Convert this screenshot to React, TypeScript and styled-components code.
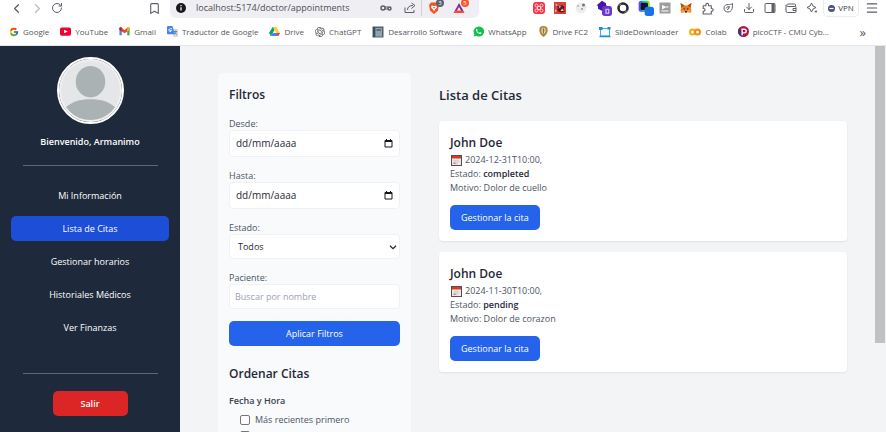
import React from "react";
import styled, { createGlobalStyle, css } from "styled-components";
import {
  ChevronLeft, ChevronRight, RotateCw, Bookmark, Puzzle, Download, Menu,
} from "lucide-react";
import { FcGoogle } from "react-icons/fc";
import { SiOpenai } from "react-icons/si";

const GlobalStyle = createGlobalStyle`
  *, *::before, *::after { box-sizing: border-box; }
  html, body, #root { height: 100%; margin: 0; }
  body { font: 9px/14px "Open Sans", "Noto Sans", sans-serif; color: #1f2937; overflow: hidden; }
  button, input, select { font: inherit; color: inherit; margin: 0; padding: 0; border: 0; }
  button { background: none; cursor: pointer; }
  a { color: inherit; text-decoration: none; }
  h1, h2, h3, h4, p { margin: 0; font: inherit; }
  svg { display: block; flex: none; }
`;

const Window = styled.div`
  display: flex;
  flex-direction: column;
  height: 100vh;
  overflow: hidden;
  background: #f3f4f6;
`;

/* ---------- browser chrome ---------- */

const Chrome = styled.header`
  flex: none;
  background: #fff;
  border-bottom: 1px solid #e6e6e9;
`;

const Toolbar = styled.div`
  display: flex;
  height: 18px;
  padding: 0 9px;
`;

const NavButtons = styled.div`
  display: flex;
  gap: 9px;
  margin-right: 85px;
  height: 16px;
  align-items: center;
`;

const ToolButton = styled.button<{ $faded?: boolean }>`
  position: relative;
  display: grid;
  place-items: center;
  width: 12px;
  height: 16px;
  color: ${(p) => (p.$faded ? "#bcbcc0" : "#5b5e66")};
`;

const AddressBar = styled.div`
  display: flex;
  align-items: center;
  gap: 10px;
  flex: 0 1 309px;
  margin-left: 10px;
  padding: 0 14px 2px 6px;
  background: #efeef3;
  border-radius: 0 0 6px 6px;
`;

const AddressInput = styled.input`
  flex: 1;
  min-width: 0;
  background: none;
  outline: none;
  color: #4d4f57;
`;

const AddressTools = styled.div`
  display: flex;
  align-items: center;
  gap: 5px;
`;

const PageTools = styled.div`
  display: flex;
  gap: 12px;
`;

const Shields = styled.div`
  display: flex;
  gap: 13px;
  padding-left: 6px;
  border-left: 1px solid #d2d1d8;
`;

const Badge = styled.span<{ $color: string }>`
  position: absolute;
  top: -1px;
  right: -4px;
  width: 8px;
  height: 8px;
  border-radius: 4px;
  background: ${(p) => p.$color};
  color: #fff;
  font-size: 6px;
  line-height: 8px;
  text-align: center;
`;

const Extensions = styled.div`
  display: flex;
  gap: 9px;
  margin-left: auto;
`;

const VpnButton = styled.button`
  display: flex;
  align-items: center;
  justify-content: center;
  gap: 3px;
  width: 36px;
  height: 17px;
  margin: 0 6px 0 5px;
  border: 1px solid #ececf0;
  border-top: 0;
  border-radius: 0 0 5px 5px;
  font-size: 8px;
  color: #3b3d4f;
`;

const Bookmarks = styled.nav`
  display: flex;
  align-items: center;
  gap: 11px;
  height: 27px;
  padding: 0 20px 0 9px;
  font-size: 8px;
  color: #55565c;
`;

const BookmarkLink = styled.a`
  display: flex;
  align-items: center;
  gap: 4px;
  white-space: nowrap;
`;

const More = styled.button`
  margin-left: auto;
  font-size: 13px;
  line-height: 12px;
`;

/* ---------- application ---------- */

const AppBody = styled.div`
  display: flex;
  flex: 1;
  min-height: 0;
`;

const Sidebar = styled.aside`
  flex: none;
  display: flex;
  flex-direction: column;
  align-items: center;
  width: 180px;
  padding: 11px;
  background: #1e293b;
  color: #fff;
`;

const Avatar = styled.div`
  flex: none;
  width: 67px;
  height: 67px;
  border: 2px solid #fff;
  border-radius: 50%;
  overflow: hidden;
`;

const Welcome = styled.p`
  margin: 11px 0 16px;
  font-weight: 600;
`;

const Divider = styled.hr`
  flex: none;
  width: 135px;
  height: 1px;
  margin: 0;
  border: 0;
  background: #5d6675;
`;

const SideNav = styled.nav`
  display: flex;
  flex-direction: column;
  align-self: stretch;
  gap: 8px;
  margin: 17px 0 33px;
`;

const SideLink = styled.a<{ $active?: boolean }>`
  height: 25px;
  line-height: 25px;
  border-radius: 5px;
  text-align: center;
  ${(p) => p.$active && css`background: #1d4ed8;`}
`;

const Button = styled.button<{ $variant?: "danger"; $wide?: boolean }>`
  height: 25px;
  padding: 0 11px;
  border-radius: 5px;
  background: #2563eb;
  color: #fff;
  ${(p) => p.$wide && css`width: 100%;`}
  ${(p) => p.$variant === "danger" && css`
    width: 75px;
    margin-top: 17px;
    background: #dc2626;
    font-weight: 600;
    flex: none;
  `}
`;

const Main = styled.main`
  flex: 1;
  min-width: 0;
  display: grid;
  grid-template-columns: 193px minmax(0, 1fr);
  gap: 28px;
  padding: 27px 28px 0 38px;
`;

const FilterCard = styled.section`
  align-self: start;
  padding: 11px;
  border-radius: 5px;
  background: #f9fafb;
`;

const PanelTitle = styled.h2`
  font-size: 12px;
  line-height: 22px;
  font-weight: 600;
`;

const Form = styled.form`
  display: flex;
  flex-direction: column;
  gap: 12px;
  margin: 11px 0 17px;
`;

const Field = styled.label`
  display: block;
  line-height: 13px;
  color: #4b5563;
`;

const controlBox = css`
  width: 100%;
  background: #fff;
  border: 1px solid #f0f1f3;
  border-radius: 4px;
`;

const DateBox = styled.span`
  ${controlBox}
  display: flex;
  align-items: center;
  height: 27px;
  padding: 0 6px;
`;

const DateInput = styled.input`
  flex: 1;
  min-width: 0;
  background: none;
  outline: none;
  font-size: 10px;
  &::placeholder { color: #1f2937; opacity: 1; }
`;

const SelectBox = styled.span`
  ${controlBox}
  display: flex;
  align-items: center;
  height: 25px;
  padding-right: 2px;
`;

const Select = styled.select`
  flex: 1;
  height: 23px;
  padding-left: 8px;
  background: none;
  appearance: none;
  outline: none;
  color: #1f2937;
`;

const TextInput = styled.input`
  ${controlBox}
  display: block;
  height: 25px;
  padding: 0 5px;
  outline: none;
  &::placeholder { color: #9ca3af; opacity: 1; }
`;

const GroupTitle = styled.h3`
  margin: 9px 0 5px;
  font-weight: 600;
  color: #374151;
`;

const CheckList = styled.div`
  display: flex;
  flex-direction: column;
  gap: 3px;
  padding-left: 11px;
`;

const CheckLabel = styled.label`
  display: flex;
  align-items: center;
  gap: 5px;
  height: 13px;
  color: #4b5563;
`;

const Checkbox = styled.input`
  appearance: none;
  width: 10px;
  height: 10px;
  border: 1px solid #767676;
  border-radius: 2px;
  background: #fff;
  &:checked { background: #2563eb; }
`;

const ListSection = styled.section`
  padding-top: 11px;
`;

const ListTitle = styled.h1`
  margin-bottom: 15px;
  font-size: 13px;
  line-height: 22px;
  font-weight: 600;
`;

const Cards = styled.div`
  display: flex;
  flex-direction: column;
  gap: 11px;
`;

const Card = styled.article`
  padding: 11px;
  border-radius: 4px;
  background: #fff;
  box-shadow: 0 1px 2px rgba(0, 0, 0, 0.08);
  color: #4b5563;
`;

const Patient = styled.h2`
  font-size: 12px;
  line-height: 21px;
  font-weight: 600;
  color: #1f2937;
`;

const When = styled.p`
  display: flex;
  align-items: center;
  gap: 3px;
  padding-left: 1px;
`;

const Status = styled.strong`
  font-weight: 600;
  color: #1f2937;
`;

const Actions = styled.div`
  margin-top: 10px;
`;

const Scrollbar = styled.div`
  flex: none;
  width: 11px;
  padding-right: 1px;
`;

const Thumb = styled.div`
  height: 77%;
  background: #c1c1c3;
`;

/* ---------- drawings ---------- */

const Ico = ({ children, box = 24, size = 12 }: { children: React.ReactNode; box?: number; size?: number }) => (
  <svg width={size} height={size} viewBox={`0 0 ${box} ${box}`} fill="none" aria-hidden="true">{children}</svg>
);

const extensions: { name: string; icon: React.ReactNode }[] = [
  { name: "Atajos", icon: <Ico><rect width="24" height="24" rx="6" fill="#fb2f4d" /><path d="M9 9h6v6H9z" stroke="#ffd4c8" strokeWidth="2" /><g fill="#fb2f4d" stroke="#ffd4c8" strokeWidth="2"><circle cx="7" cy="7" r="3" /><circle cx="17" cy="7" r="3" /><circle cx="7" cy="17" r="3" /><circle cx="17" cy="17" r="3" /></g></Ico> },
  { name: "Lector", icon: <Ico><rect width="24" height="24" fill="#d8413b" /><path d="M6 8l5 1 5-3 5 4-2 4 3 5-6 2-6-1-4-4 2-4z" fill="#571b1c" /><path d="M3 4l4 1-2 4zM16 13l4 5h-7zM10 8l4 1-3 4zM2 15l4 2-3 4z" fill="#f5c3b7" /></Ico> },
  { name: "Mascota", icon: <Ico><circle cx="12" cy="12" r="11" fill="#ededee" /><circle cx="6" cy="8" r="2" fill="#b6b6b8" /><circle cx="17" cy="6" r="3" fill="#747478" /><circle cx="14" cy="14" r="2" fill="#99999c" /></Ico> },
  { name: "Bloques", icon: <Ico size={16}><path d="M9 1l6 4v3l5 3-8 7-9-5V9L1 8z" fill="#4a16a8" /><rect x="9" y="9" width="15" height="15" rx="4" fill="#6938cf" /><rect x="14" y="13" width="6" height="8" rx="1" fill="#c7b4f5" /><path d="M17 15v4" stroke="#6938cf" strokeWidth="2" /></Ico> },
  { name: "Anillo", icon: <Ico><circle cx="12" cy="12" r="9" stroke="#26272b" strokeWidth="5" /><path d="M3 7l6-3M15 21l6-4" stroke="#8b8c91" strokeWidth="2" /></Ico> },
  { name: "Selector", icon: <Ico size={16}><defs><linearGradient id="spectrum" x1="0" y1="0" x2="1" y2="0"><stop offset="0" stopColor="#7a28ff" /><stop offset=".4" stopColor="#18b7e8" /><stop offset=".7" stopColor="#2ce05b" /><stop offset="1" stopColor="#d6e033" /></linearGradient></defs><rect x="1" y="1" width="17" height="17" rx="4" fill="url(#spectrum)" /><rect x="4" y="4" width="11" height="11" rx="2" fill="#111326" /><rect x="10" y="10" width="14" height="14" rx="4" fill="#1a73e8" /></Ico> },
  { name: "Video", icon: <Ico><rect x="1" y="1" width="22" height="22" fill="#9d9d9f" /><path d="M6 6l9 4-9 5z" fill="#fff" /><path d="M5 18h14M14 10h5" stroke="#fff" strokeWidth="2" /></Ico> },
  { name: "Zorro", icon: <Ico><path d="M1 2l8 5h6l8-5-2 9 2 6-2 5-6-2-2 2h-2l-2-2-6 2-2-5 2-6z" fill="#ee7d1b" /><path d="M1 2l8 5-6 5zM23 2l-8 5 6 5z" fill="#b64f17" /><path d="M6 12l4 1v3zM18 12l-4 1v3zM9 18h6l-2 3h-2z" fill="#233447" /><path d="M3 17l5-1 2 4-6 1zM21 17l-5-1-2 4 6 1z" fill="#f6a351" /></Ico> },
  { name: "Extensiones", icon: <Ico size={13}><path d="M4 7h5V5a2 2 0 0 1 5 0v2h5v5h1a2 2 0 0 1 0 5h-1v5H4v-5h1a2 2 0 0 0 0-5H4z" stroke="currentColor" strokeWidth="2" strokeLinejoin="round" /></Ico> },
  { name: "Leo", icon: <Ico><path d="M21 3c0 10-1 17-9 17-5 0-8-3-8-8s4-7 9-7c3 0 6 0 8-2zM8 13c2-4 5-4 7-4-1 4-2 6-5 6" stroke="currentColor" strokeWidth="2" /><path d="M12 12h2" stroke="currentColor" strokeWidth="2" /></Ico> },
  { name: "Descargas", icon: <Download size={12} /> },
  { name: "Panel lateral", icon: <Ico><rect x="2" y="3" width="20" height="18" rx="2" stroke="currentColor" strokeWidth="2" /><path d="M15 3h6v18h-6z" fill="currentColor" /></Ico> },
  { name: "Cartera", icon: <Ico><path d="M21 8V6a2 2 0 0 0-2-2H5a3 3 0 0 0 0 5h15a2 2 0 0 1 2 2v8a2 2 0 0 1-2 2H5a3 3 0 0 1-3-3V6M22 13h-6v4h6" stroke="currentColor" strokeWidth="2" /></Ico> },
  { name: "Asistente", icon: <Ico><path d="M11 2l3 6 6 3-6 3-3 6-3-6-6-3 6-3z" stroke="currentColor" strokeWidth="2" strokeLinejoin="round" /><path d="M20 16l1 2 2 1-2 1-1 3-1-3-3-1 3-1z" fill="currentColor" /></Ico> },
];

const bookmarks: { name: string; icon: React.ReactNode }[] = [
  { name: "Google", icon: <FcGoogle size={10} /> },
  { name: "YouTube", icon: <Ico size={11}><rect y="3" width="24" height="18" rx="4" fill="#f00033" /><path d="M9 8l8 4-8 4z" fill="#fff" /></Ico> },
  { name: "Gmail", icon: <Ico size={11}><path d="M1 5v15h5V10z" fill="#4285f4" /><path d="M23 5v15h-5V10z" fill="#34a853" /><path d="M1 5c0-2 3-3 5-1l6 5 6-5c2-2 5-1 5 1v3l-11 8L1 8z" fill="#ea4335" /><path d="M18 4c2-2 5-1 5 1v3l-5 4z" fill="#fbbc04" /><path d="M1 5c0-2 3-3 5-1v8L1 8z" fill="#c5221f" /></Ico> },
  { name: "Traductor de Google", icon: <Ico size={11}><path d="M10 6h12a2 2 0 0 1 2 2v14a2 2 0 0 1-2 2h-8z" fill="#d5d9e0" /><path d="M2 0h10l5 18H2a2 2 0 0 1-2-2V2a2 2 0 0 1 2-2z" fill="#4285f4" /><path d="M11 6H7a3 3 0 1 0 3 4H7" stroke="#fff" strokeWidth="2" /><path d="M15 12h7M18 10v2M20 12c-1 4-3 5-4 6M17 14l4 5" stroke="#607d9b" strokeWidth="2" /></Ico> },
  { name: "Drive", icon: <Ico size={11}><path d="M8 2h8L4 22l-4-7z" fill="#0f9d58" /><path d="M8 2h8l8 13h-8z" fill="#ffcd40" /><path d="M8 15h16l-4 7H4z" fill="#4285f4" /><path d="M16 15h8l-4 7z" fill="#ea4335" /></Ico> },
  { name: "ChatGPT", icon: <SiOpenai size={10} /> },
  { name: "Desarrollo Software", icon: <Ico size={12}><rect x="1" y="1" width="22" height="22" fill="#53616c" /><rect x="7" y="4" width="13" height="17" fill="#8fa5b6" /><path d="M4 2v20M9 8h9" stroke="#2f3942" strokeWidth="2" /></Ico> },
  { name: "WhatsApp", icon: <Ico size={11}><path d="M12 1a11 11 0 0 0-9 17l-2 5 6-2A11 11 0 1 0 12 1z" fill="#12c04c" /><path d="M8 6c-4 3 2 12 8 12 2 0 3-3 2-4l-3-1-2 2c-2-1-3-2-4-4l1-2-1-3z" fill="#fff" /></Ico> },
  { name: "Drive FC2", icon: <Ico size={11}><path d="M12 0c7 0 10 4 9 11-1 6-4 10-9 13-5-3-8-7-9-13C2 4 5 0 12 0z" fill="#a88745" /><ellipse cx="12" cy="10" rx="5" ry="7" fill="#e0cc96" /><path d="M12 5v11M10 9h4" stroke="#8a6c34" strokeWidth="2" /></Ico> },
  { name: "SlideDownloader", icon: <Ico size={12}><rect x="3" y="5" width="18" height="15" stroke="#48a9e6" strokeWidth="2" fill="#f3faff" /><path d="M0 2h7v6H0zM17 2h6v5h-6z" fill="#248bd0" /><path d="M1 21h22" stroke="#248bd0" strokeWidth="3" /></Ico> },
  { name: "Colab", icon: <Ico size={12}><circle cx="7" cy="12" r="5" stroke="#f9ab00" strokeWidth="4" /><circle cx="17" cy="12" r="5" stroke="#f28b0c" strokeWidth="4" /></Ico> },
  { name: "picoCTF - CMU Cyb...", icon: <Ico size={11}><circle cx="12" cy="12" r="12" fill="#b3123c" /><path d="M3 4a12 12 0 0 0 5 19l1-8z" fill="#45317a" /><path d="M9 20V7h5a4 4 0 0 1 0 8H9" stroke="#fff" strokeWidth="3" /></Ico> },
];

const AvatarPicture = () => (
  <svg width="63" height="63" viewBox="0 0 64 64" role="img" aria-label="Foto de perfil">
    <rect width="64" height="64" fill="#e4e6e8" />
    <ellipse cx="32" cy="23" rx="15" ry="16" fill="#aab2b4" />
    <path d="M4 52C12 43 22 41 32 41s20 2 28 11v12H4z" fill="#aab2b4" />
    <circle cx="32" cy="32" r="31" fill="none" stroke="#eff0f1" strokeWidth="2" />
  </svg>
);

const DateIcon = () => (
  <Ico size={9} box={18}><path d="M2 3h14v13H2zM5 0v3M13 0v3" stroke="#15171a" strokeWidth="2" /><path d="M2 3h14v3H2z" fill="#15171a" /></Ico>
);

const CalendarIcon = () => (
  <Ico size={11} box={22}>
    <rect x="1" y="1" width="20" height="20" fill="#ece9e8" stroke="#5b4d4c" strokeWidth="2" />
    <path d="M2 2h18v5H2z" fill="#d93a22" />
    <path d="M5 11h12M5 14h12M5 17h7M8 9v10M12 9v10" stroke="#c9c3c2" />
    <path d="M5 15h4v3H5z" fill="#e07a68" />
  </Ico>
);

const appointments = [
  { date: "2024-12-31T10:00,", status: "completed", reason: "Dolor de cuello" },
  { date: "2024-11-30T10:00,", status: "pending", reason: "Dolor de corazon" },
];

const sections = ["Mi Información", "Lista de Citas", "Gestionar horarios", "Historiales Médicos", "Ver Finanzas"];

const DateField = ({ label }: { label: string }) => (
  <Field>
    {label}
    <DateBox>
      <DateInput type="text" placeholder="dd/mm/aaaa" />
      <DateIcon />
    </DateBox>
  </Field>
);

export default function App() {
  return (
    <Window>
      <GlobalStyle />
      <Chrome>
        <Toolbar>
          <NavButtons>
            <ToolButton aria-label="Atrás"><ChevronLeft size={15} strokeWidth={2} /></ToolButton>
            <ToolButton aria-label="Adelante" $faded><ChevronRight size={15} strokeWidth={2} /></ToolButton>
            <ToolButton aria-label="Recargar"><RotateCw size={12} strokeWidth={2} /></ToolButton>
          </NavButtons>
          <ToolButton aria-label="Guardar marcador"><Bookmark size={13} strokeWidth={2} /></ToolButton>
          <AddressBar>
            <Ico size={10}><circle cx="12" cy="12" r="12" fill="#17181c" /><path d="M12 10v8M12 5v3" stroke="#fff" strokeWidth="3" /></Ico>
            <AddressInput aria-label="Dirección" defaultValue="localhost:5174/doctor/appointments" />
            <AddressTools>
              <PageTools>
                <ToolButton aria-label="Contraseñas"><Ico><circle cx="6" cy="12" r="4" stroke="currentColor" strokeWidth="3" /><path d="M10 10h7M10 14h7" stroke="currentColor" strokeWidth="2" /><circle cx="19" cy="13" r="3" stroke="currentColor" strokeWidth="3" /></Ico></ToolButton>
                <ToolButton aria-label="Compartir"><Ico><path d="M2 11v10h18v-5M7 16c0-6 4-9 11-9M15 2l7 5-7 6" stroke="currentColor" strokeWidth="2" /></Ico></ToolButton>
              </PageTools>
              <Shields>
                <ToolButton aria-label="Escudos">
                  <Ico><path d="M6 1h12l4 5-2 11-8 7-8-7L2 6z" fill="#f4511e" /><path d="M7 7l5 1 5-1 1 4-4 4-2 4-2-4-4-4z" fill="#fff" /><path d="M10 10h4l-2 4z" fill="#f4511e" /></Ico>
                  <Badge $color="#5a6070">3</Badge>
                </ToolButton>
                <ToolButton aria-label="Recompensas">
                  <Ico><path d="M12 2L1 22l7-5 4-7z" fill="#a3278f" /><path d="M12 2l11 20-7-5-4-7z" fill="#662d91" /><path d="M1 22h22l-7-5H8z" fill="#ff4724" /></Ico>
                  <Badge $color="#fb542b">5</Badge>
                </ToolButton>
              </Shields>
            </AddressTools>
          </AddressBar>
          <Extensions>
            {extensions.map((e) => <ToolButton key={e.name} aria-label={e.name}>{e.icon}</ToolButton>)}
          </Extensions>
          <VpnButton>
            <Ico size={7}><circle cx="12" cy="12" r="12" fill="#4c5080" /><path d="M5 12h14" stroke="#fff" strokeWidth="4" /></Ico>
            VPN
          </VpnButton>
          <ToolButton aria-label="Menú"><Menu size={14} strokeWidth={2} /></ToolButton>
        </Toolbar>
        <Bookmarks aria-label="Marcadores">
          {bookmarks.map((b) => <BookmarkLink key={b.name} href="#">{b.icon}{b.name}</BookmarkLink>)}
          <More aria-label="Más marcadores">»</More>
        </Bookmarks>
      </Chrome>

      <AppBody>
        <Sidebar>
          <Avatar><AvatarPicture /></Avatar>
          <Welcome>Bienvenido, Armanimo</Welcome>
          <Divider />
          <SideNav>
            {sections.map((s) => <SideLink key={s} href="#" $active={s === "Lista de Citas"}>{s}</SideLink>)}
          </SideNav>
          <Divider />
          <Button $variant="danger">Salir</Button>
        </Sidebar>

        <Main>
          <FilterCard>
            <PanelTitle>Filtros</PanelTitle>
            <Form onSubmit={(e) => e.preventDefault()}>
              <DateField label="Desde:" />
              <DateField label="Hasta:" />
              <Field>
                Estado:
                <SelectBox>
                  <Select>
                    <option>Todos</option>
                    <option>pending</option>
                    <option>completed</option>
                  </Select>
                  <Ico size={8}><path d="M3 8l9 9 9-9" stroke="#1f2937" strokeWidth="4" /></Ico>
                </SelectBox>
              </Field>
              <Field>
                Paciente:
                <TextInput type="text" placeholder="Buscar por nombre" />
              </Field>
              <Button $wide type="submit">Aplicar Filtros</Button>
            </Form>
            <PanelTitle>Ordenar Citas</PanelTitle>
            <GroupTitle>Fecha y Hora</GroupTitle>
            <CheckList>
              <CheckLabel><Checkbox type="checkbox" />Más recientes primero</CheckLabel>
              <CheckLabel><Checkbox type="checkbox" aria-label="Más antiguos primero" /></CheckLabel>
            </CheckList>
          </FilterCard>

          <ListSection>
            <ListTitle>Lista de Citas</ListTitle>
            <Cards>
              {appointments.map((a) => (
                <Card key={a.date}>
                  <Patient>John Doe</Patient>
                  <When><CalendarIcon />{a.date}</When>
                  <p>Estado: <Status>{a.status}</Status></p>
                  <p>Motivo: {a.reason}</p>
                  <Actions><Button>Gestionar la cita</Button></Actions>
                </Card>
              ))}
            </Cards>
          </ListSection>
        </Main>
        <Scrollbar><Thumb /></Scrollbar>
      </AppBody>
    </Window>
  );
}
